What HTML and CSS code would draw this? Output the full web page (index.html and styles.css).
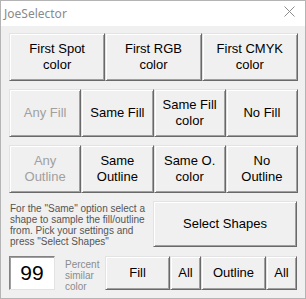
FILE: index.html
```html
<!DOCTYPE html>
<html lang="en">
<head>
    <meta charset="UTF-8">
    <meta name="viewport" content="width=device-width, initial-scale=1.0">
    <title>JoeSelector</title>
    <link rel="stylesheet" href="styles.css">
</head>
<body>
    <div class="window">
        <div class="titlebar">
            <span class="title">JoeSelector</span>
            <svg class="close" width="11" height="11" viewBox="0 0 11 11">
                <path d="M0.5 0.5 L10.5 10.5 M10.5 0.5 L0.5 10.5" stroke="#8c8c8c" stroke-width="1" fill="none"/>
            </svg>
        </div>
        <div class="content">
            <div class="row row-3">
                <button class="btn">First Spot<br>color</button>
                <button class="btn">First RGB<br>color</button>
                <button class="btn">First CMYK<br>color</button>
            </div>
            <div class="row row-4">
                <button class="btn disabled">Any Fill</button>
                <button class="btn">Same Fill</button>
                <button class="btn">Same Fill<br>color</button>
                <button class="btn">No Fill</button>
            </div>
            <div class="row row-4">
                <button class="btn disabled">Any<br>Outline</button>
                <button class="btn">Same<br>Outline</button>
                <button class="btn">Same O.<br>color</button>
                <button class="btn">No<br>Outline</button>
            </div>
            <div class="row row-help">
                <p class="help">For the "Same" option select a shape to sample the fill/outline from. Pick your settings and press "Select Shapes"</p>
                <button class="btn">Select Shapes</button>
            </div>
            <div class="row row-bottom">
                <input class="percent-box" type="text" value="99">
                <div class="percent-label">Percent<br>similar<br>color</div>
                <div class="bottom-buttons">
                    <button class="btn">Fill</button>
                    <button class="btn">All</button>
                    <button class="btn">Outline</button>
                    <button class="btn">All</button>
                </div>
            </div>
        </div>
    </div>
</body>
</html>
```

FILE: styles.css
```css
body {
    margin: 0;
    font-family: "Liberation Sans", Arial, sans-serif;
    background-color: #fff;
}

.window {
    width: 306px;
    height: 299px;
    box-sizing: border-box;
    border: 1px solid #b4b4b4;
    background-color: #f0f0f0;
    display: flex;
    flex-direction: column;
}

.titlebar {
    height: 25px;
    background-color: #fff;
    display: flex;
    align-items: center;
    justify-content: space-between;
    padding: 0 10px 0 3px;
}

.title {
    font-family: "Noto Sans", "Open Sans", sans-serif;
    font-size: 12px;
    color: #8a8a8a;
    margin-top: -1px;
}

.close {
    margin-top: -4px;
}

.content {
    padding: 7px 7px 0 8px;
}

.row {
    display: grid;
    height: 48px;
    margin-bottom: 8px;
}

.row-3 {
    grid-template-columns: repeat(3, 1fr);
}

.row-4 {
    grid-template-columns: repeat(4, 1fr);
}

.btn {
    font-family: "Liberation Sans", Arial, sans-serif;
    font-size: 13px;
    line-height: 16px;
    color: #000;
    background-color: #f0f0f0;
    border: 1px solid;
    border-color: #e3e3e3 #696969 #696969 #e3e3e3;
    box-shadow: inset 1px 1px #fff, inset -1px -1px #a0a0a0;
    padding: 0;
    margin: 0;
    cursor: pointer;
}

.btn.disabled {
    color: #a0a0a0;
}

.row-help {
    grid-template-columns: 144px 144px;
    height: 46px;
    margin-bottom: 9px;
}

.help {
    margin: 0;
    padding: 2px 0 0 1px;
    font-size: 10px;
    line-height: 11px;
    color: #555;
}

.row-bottom {
    display: flex;
    height: 34px;
    margin-bottom: 0;
}

.percent-box {
    width: 46px;
    height: 34px;
    box-sizing: border-box;
    margin: 0;
    padding: 0;
    border: 1px solid;
    border-color: #828282 #e3e3e3 #e3e3e3 #828282;
    box-shadow: inset 1px 1px #a0a0a0;
    background-color: #fff;
    font-family: "Liberation Sans", Arial, sans-serif;
    font-size: 21px;
    text-align: center;
    color: #000;
}

.percent-label {
    width: 40px;
    padding: 3px 0 0 10px;
    font-size: 10px;
    line-height: 11px;
    color: #8c8c8c;
}

.bottom-buttons {
    display: grid;
    grid-template-columns: 65px 31px 65px 31px;
}
```
